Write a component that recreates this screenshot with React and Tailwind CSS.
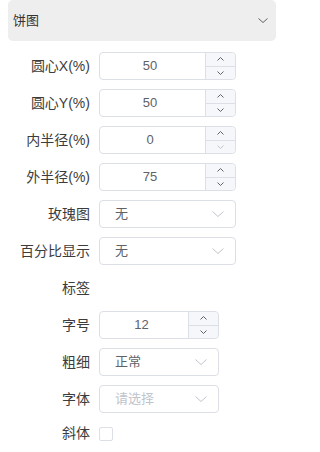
import { useState } from 'react'

const FONT = { fontFamily: '"Liberation Sans", "Noto Sans CJK SC", sans-serif' }

function Chevron({ up, className, w = 8, h = 4 }) {
  return (
    <svg width={w} height={h} viewBox={`0 0 ${w} ${h}`} className={className} fill="none">
      <polyline
        points={up ? `0.5,${h - 0.5} ${w / 2},0.5 ${w - 0.5},${h - 0.5}` : `0.5,0.5 ${w / 2},${h - 0.5} ${w - 0.5},0.5`}
        stroke="currentColor"
        strokeWidth="1"
      />
    </svg>
  )
}

function NumberInput({ value, width, minDisabled }) {
  return (
    <div className={`flex h-[28px] rounded-[4px] border border-[#dcdfe6] bg-white ${width}`}>
      <div className="flex flex-1 items-center justify-center pl-[15px] pr-[20px] text-[13px] text-[#606266]">{value}</div>
      <div className="flex w-[30px] flex-col rounded-r-[4px] border-l border-[#dcdfe6] bg-[#f5f7fa]">
        <div className="flex flex-1 items-center justify-center border-b border-[#dcdfe6] text-[#606266]">
          <Chevron up w={7} h={4} />
        </div>
        <div className={`flex flex-1 items-center justify-center ${minDisabled ? 'text-[#c0c4cc]' : 'text-[#606266]'}`}>
          <Chevron w={7} h={4} />
        </div>
      </div>
    </div>
  )
}

function Select({ value, placeholder, width, pr }) {
  return (
    <div className={`flex h-[28px] items-center justify-between rounded-[4px] border border-[#dcdfe6] bg-white pl-[15px] ${pr} ${width}`}>
      <span className={`text-[13px] ${value ? 'text-[#606266]' : 'text-[#c0c4cc]'}`}>{value || placeholder}</span>
      <Chevron w={12} h={6} className="text-[#c0c4cc]" />
    </div>
  )
}

function Row({ label, children, h = 'h-[28px]' }) {
  return (
    <div className={`mb-[9px] flex items-center ${h}`}>
      <div className="w-[90px] shrink-0 text-right text-[14px] text-[#3c3c3c]">{label}</div>
      <div className="ml-[9px]">{children}</div>
    </div>
  )
}

export default function App() {
  const [italic, setItalic] = useState(false)

  return (
    <div className="h-[452px] w-[286px] bg-white" style={FONT}>
      <div className="mx-[8px] flex h-[41px] w-[268px] items-center justify-between rounded-[5px] bg-[#eeeeee] pl-[5px] pr-[8px]">
        <span className="text-[13px] text-[#333333]">饼图</span>
        <Chevron w={10} h={5} className="text-[#606266]" />
      </div>

      <div className="pt-[11px]">
        <Row label="圆心X(%)"><NumberInput value="50" width="w-[137px]" /></Row>
        <Row label="圆心Y(%)"><NumberInput value="50" width="w-[137px]" /></Row>
        <Row label="内半径(%)"><NumberInput value="0" width="w-[137px]" minDisabled /></Row>
        <Row label="外半径(%)"><NumberInput value="75" width="w-[137px]" /></Row>
        <Row label="玫瑰图"><Select value="无" width="w-[137px]" pr="pr-[11px]" /></Row>
        <Row label="百分比显示"><Select value="无" width="w-[137px]" pr="pr-[11px]" /></Row>

        <Row label="标签" />
        <Row label="字号"><NumberInput value="12" width="w-[120px]" /></Row>
        <Row label="粗细"><Select value="正常" width="w-[120px]" pr="pr-[11px]" /></Row>
        <Row label="字体"><Select placeholder="请选择" width="w-[120px]" pr="pr-[11px]" /></Row>
        <Row label="斜体" h="h-[22px]">
          <button
            onClick={() => setItalic(!italic)}
            className={`mt-[1px] block h-[14px] w-[14px] rounded-[2px] border border-[#dcdfe6] ${italic ? 'bg-[#409eff]' : 'bg-white'}`}
          />
        </Row>
      </div>
    </div>
  )
}
